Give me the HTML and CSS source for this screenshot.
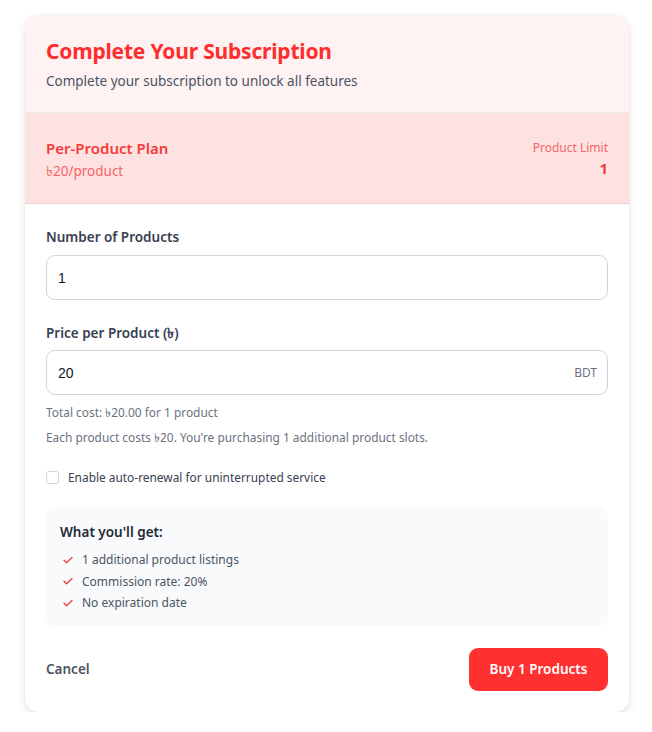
FILE: index.html
```html
<!DOCTYPE html>
<html lang="en">
<head>
<meta charset="utf-8">
<title>Complete Your Subscription</title>
<link rel="stylesheet" href="styles.css">
</head>
<body>
<div class="card">
  <div class="header">
    <h1 class="title">Complete Your Subscription</h1>
    <p class="subtitle">Complete your subscription to unlock all features</p>
  </div>
  <div class="plan">
    <div class="plan-left">
      <div class="plan-name">Per-Product Plan</div>
      <div class="plan-price">৳20/product</div>
    </div>
    <div class="plan-right">
      <div class="limit-label">Product Limit</div>
      <div class="limit-value">1</div>
    </div>
  </div>
  <div class="body">
    <div class="field">
      <label class="label">Number of Products</label>
      <div class="input"><span class="value">1</span></div>
    </div>
    <div class="field field-price">
      <label class="label">Price per Product (৳)</label>
      <div class="input"><span class="value">20</span><span class="suffix">BDT</span></div>
      <p class="hint hint-first">Total cost: ৳20.00 for 1 product</p>
      <p class="hint">Each product costs ৳20. You're purchasing 1 additional product slots.</p>
    </div>
    <label class="check-row"><span class="checkbox"></span><span class="check-text">Enable auto-renewal for uninterrupted service</span></label>
    <div class="benefits">
      <div class="benefits-title">What you'll get:</div>
      <ul class="benefit-list">
        <li class="benefit"><svg class="tick" viewBox="0 0 12 12" width="12" height="12"><path d="M2 6.3 L4.6 8.8 L10 3.4" fill="none" stroke="#ef4444" stroke-width="1.4" stroke-linecap="round" stroke-linejoin="round"/></svg>1 additional product listings</li>
        <li class="benefit"><svg class="tick" viewBox="0 0 12 12" width="12" height="12"><path d="M2 6.3 L4.6 8.8 L10 3.4" fill="none" stroke="#ef4444" stroke-width="1.4" stroke-linecap="round" stroke-linejoin="round"/></svg>Commission rate: 20%</li>
        <li class="benefit"><svg class="tick" viewBox="0 0 12 12" width="12" height="12"><path d="M2 6.3 L4.6 8.8 L10 3.4" fill="none" stroke="#ef4444" stroke-width="1.4" stroke-linecap="round" stroke-linejoin="round"/></svg>No expiration date</li>
      </ul>
    </div>
    <div class="actions">
      <button class="cancel">Cancel</button>
      <button class="buy">Buy 1 Products</button>
    </div>
  </div>
</div>
</body>
</html>
```

FILE: styles.css
```css
* { box-sizing: border-box; }
html, body { margin: 0; padding: 0; background: #ffffff; }
body {
  font-family: "Noto Sans", "Open Sans", "DejaVu Sans", sans-serif;
  padding: 15px 23px 0 25px;
  color: #374151;
}
.card {
  width: 604px;
  background: #fff;
  border-radius: 14px;
  box-shadow: 0 4px 10px rgba(0,0,0,0.10), 0 0 3px rgba(0,0,0,0.06);
  overflow: hidden;
}
.header {
  background: #fef2f2;
  padding: 22px 21px 23px;
  border-bottom: 1px solid #ececec;
  height: 98px;
}
.title {
  margin: 0;
  font-size: 21px;
  font-weight: 700;
  line-height: 28px;
  color: #ff2d2d;
  letter-spacing: -0.2px;
}
.subtitle {
  margin: 7px 0 0;
  font-size: 13.5px;
  line-height: 18px;
  color: #4b5563;
}
.plan {
  background: #fee2e2;
  border-bottom: 1px solid #fbcaca;
  height: 91px;
  padding: 0 21px;
  display: flex;
  justify-content: space-between;
  align-items: center;
}
.plan-left { padding-top: 2px; }
.plan-name {
  font-size: 15px;
  font-weight: 600;
  color: #f43b3b;
  line-height: 22px;
}
.plan-price {
  font-size: 13.5px;
  color: #f56565;
  line-height: 20px;
  margin-top: 2px;
}
.plan-right { text-align: right; padding-top: 2px; }
.limit-label {
  font-size: 12px;
  color: #f56565;
  line-height: 18px;
}
.limit-value {
  font-size: 15px;
  font-weight: 700;
  color: #f43b3b;
  line-height: 22px;
  margin-top: 0;
}
.body { padding: 24px 21px 21px; }
.field { display: flex; flex-direction: column; }
.label {
  font-size: 13.5px;
  font-weight: 600;
  color: #374151;
  line-height: 18px;
  margin-bottom: 9px;
}
.field-price .label { margin-bottom: 8px; }
.input {
  height: 45px;
  border: 1px solid #d1d5db;
  border-radius: 9px;
  display: flex;
  align-items: center;
  justify-content: space-between;
  padding: 0 10px 0 11px;
  font-family: "Liberation Sans", Arial, sans-serif;
  font-size: 14px;
  color: #111827;
}
.suffix {
  font-family: "Noto Sans", sans-serif;
  font-size: 12px;
  color: #6b7280;
}
.field-price { margin-top: 24px; }
.hint {
  margin: 0;
  font-size: 11.9px;
  line-height: 17px;
  color: #6b7280;
}
.hint-first { margin-top: 9px; margin-bottom: 8px; }
.check-row {
  display: flex;
  align-items: center;
  margin-top: 22px;
  gap: 9px;
}
.checkbox {
  width: 13px;
  height: 13px;
  border: 1px solid #d1d5db;
  border-radius: 3px;
  background: #fff;
}
.check-text {
  font-size: 11.9px;
  color: #374151;
  line-height: 18px;
}
.benefits {
  margin-top: 21px;
  background: #f9fafb;
  border-radius: 9px;
  padding: 16px 14px 12px;
}
.benefits-title {
  font-size: 13.5px;
  font-weight: 600;
  color: #1f2937;
  line-height: 18px;
}
.benefit-list { list-style: none; margin: 8px 0 0; padding: 0; }
.benefit {
  display: flex;
  align-items: center;
  font-size: 12px;
  color: #4b5563;
  line-height: 21.5px;
}
.tick { margin: 0 8px 0 2px; flex: none; }
.actions {
  display: flex;
  justify-content: space-between;
  align-items: center;
  margin-top: 22px;
}
.cancel {
  border: 0;
  background: none;
  padding: 0;
  font-family: inherit;
  font-size: 13.5px;
  font-weight: 600;
  color: #4b5563;
}
.buy {
  border: 0;
  background: #ff3030;
  color: #fff;
  font-family: inherit;
  font-size: 13.5px;
  font-weight: 600;
  width: 139px;
  height: 43px;
  border-radius: 9px;
}
```
